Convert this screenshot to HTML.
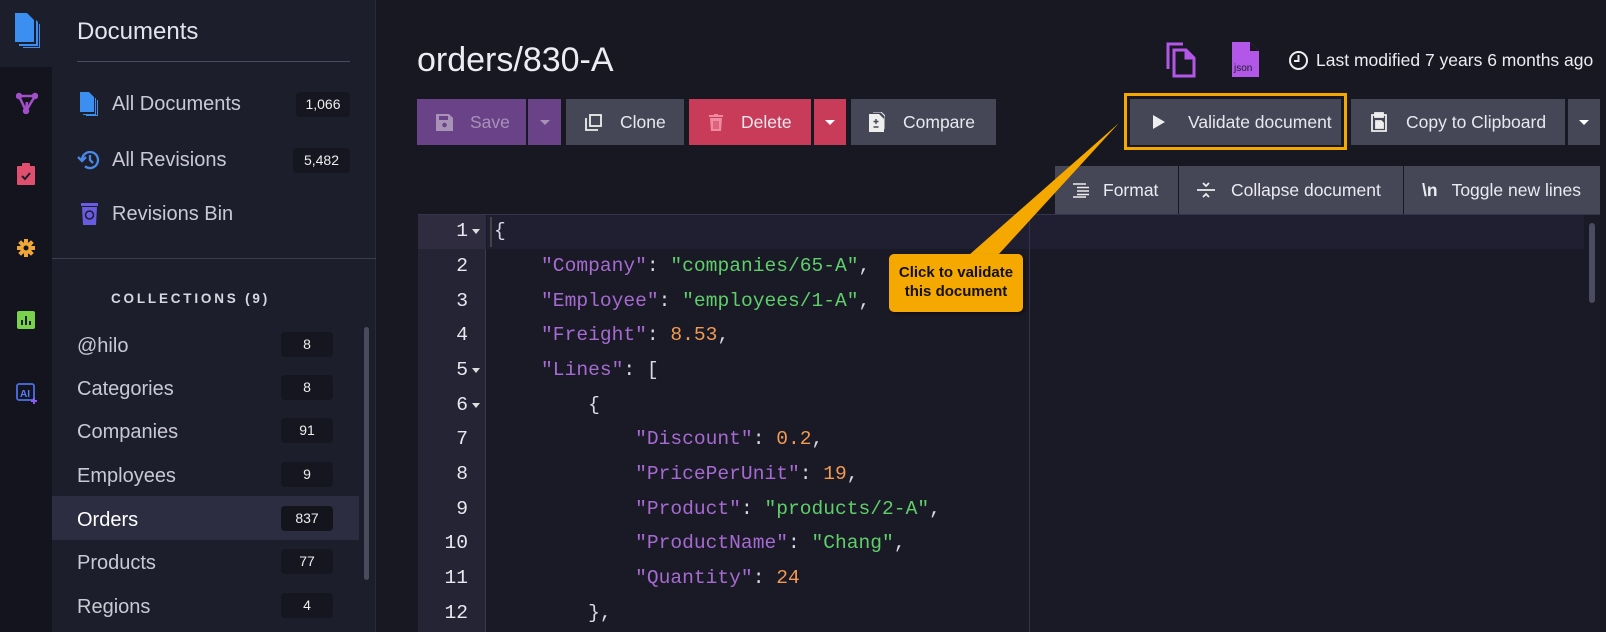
<!DOCTYPE html>
<html><head><meta charset="utf-8"><style>
*{box-sizing:border-box;margin:0;padding:0}
body{width:1606px;height:632px;overflow:hidden;background:#171822;font-family:"Liberation Sans",sans-serif;color:#e6e6ee;position:relative}
.a{position:absolute}
.strip{left:0;top:0;width:52px;height:632px;background:#13141d}
.nav{left:52px;top:0;width:324px;height:632px;background:#1d1e2b;border-right:1px solid #2a2b38}
.navitem{position:absolute;left:77px;font-size:20px;color:#c9c9d6}
.badge{position:absolute;background:#15161f;border-radius:4px;color:#eee;font-size:14px;text-align:center;line-height:25px;height:25px}
.btn{position:absolute;top:99px;height:46px;background:#454756;color:#e8e8ef;font-size:17.5px;display:flex;align-items:center}
.mono{font-family:"Liberation Mono",monospace;font-size:19.6px}
.ln{position:absolute;left:418px;width:50px;text-align:right;color:#e8e8ee}
.cl{position:absolute;left:494px;white-space:pre;color:#d9d9e4}
.k{color:#a66bd1}.s{color:#5fcf6a}.n{color:#f09a52}
.tb{position:absolute;top:166px;height:48px;background:#454756;font-size:17.5px;color:#eaeaf0;display:flex;align-items:center}
</style></head><body>
<div class="a strip"></div>
<div class="a" style="left:0;top:0;width:52px;height:67px;background:#1d1e2b"></div>
<svg class="a" style="left:12px;top:12px" width="30" height="36" viewBox="0 0 30 36"><path d="M3 1h12l7 7v22H3z" fill="#3a8ff0"/><path d="M24 8v24H7v2h19V10z" fill="#3a8ff0"/><path d="M28 12v24H11v-1h16V12z" fill="#3a8ff0"/></svg>
<svg class="a" style="left:16px;top:92px" width="22" height="22" viewBox="0 0 22 22" fill="none" stroke="#a24fc9" stroke-width="2.5"><path d="M3 4L19 4L10 19Z"/><circle cx="3" cy="4" r="2" fill="#a24fc9"/><circle cx="19" cy="4" r="2" fill="#a24fc9"/><circle cx="10" cy="19" r="2" fill="#a24fc9"/><path d="M10 19L11 10"/></svg>
<svg class="a" style="left:17px;top:163px" width="18" height="22" viewBox="0 0 18 22"><rect x="0" y="3" width="18" height="19" rx="1" fill="#e0506e"/><rect x="5" y="0" width="8" height="5" rx="1" fill="#e0506e"/><path d="M5 13l3 3 5-6" stroke="#1d1e2b" stroke-width="2" fill="none"/></svg>
<svg class="a" style="left:17px;top:239px" width="18" height="18" viewBox="0 0 18 18"><g fill="#f0a73a"><circle cx="9" cy="9" r="6"/><rect x="7" y="0" width="4" height="18"/><rect x="0" y="7" width="18" height="4"/><rect x="7" y="0" width="4" height="18" transform="rotate(45 9 9)"/><rect x="7" y="0" width="4" height="18" transform="rotate(-45 9 9)"/></g><circle cx="9" cy="9" r="2.5" fill="#13141d"/></svg>
<svg class="a" style="left:17px;top:311px" width="18" height="18" viewBox="0 0 18 18"><rect width="18" height="18" rx="2" fill="#7ad24a"/><path d="M5 14V9M9 14V5M13 14V10" stroke="#1d1e2b" stroke-width="2"/></svg>
<svg class="a" style="left:16px;top:383px" width="22" height="22" viewBox="0 0 22 22"><rect x="1" y="1" width="17" height="16" rx="2" fill="none" stroke="#4b6fe8" stroke-width="1.8"/><text x="4" y="14" font-size="10" font-weight="bold" fill="#5a7cff" font-family="Liberation Sans">AI</text><path d="M18 15v6M15 18h6" stroke="#8b5cf6" stroke-width="2"/></svg>
<div class="a nav"></div>
<div class="a" style="left:77px;top:18px;font-size:24px;color:#e4e4ec">Documents</div>
<div class="a" style="left:77px;top:61px;width:273px;height:1px;background:#4a4b5e"></div>
<svg class="a" style="left:79px;top:92px" width="20" height="24" viewBox="0 0 20 24"><path d="M1 0h9l5 5v15H1z" fill="#3a8ff0"/><path d="M16 6v16H4v1h13V6z" fill="#3a8ff0"/><path d="M19 8v16H7v-1h11V8z" fill="#3a8ff0"/></svg>
<div class="navitem" style="left:112px;top:93px">All Documents</div>
<div class="badge" style="left:296px;top:92px;width:54px">1,066</div>
<svg class="a" style="left:77px;top:149px" width="24" height="22" viewBox="0 0 24 22" fill="none" stroke="#4a88e8" stroke-width="2.3"><path d="M5 11a8 8 0 1 1 3 6.3"/><path d="M1 8l4 4 4-4"/><path d="M13 6v5l3 3"/></svg>
<div class="navitem" style="left:112px;top:149px">All Revisions</div>
<div class="badge" style="left:293px;top:148px;width:57px">5,482</div>
<svg class="a" style="left:81px;top:202px" width="17" height="23" viewBox="0 0 17 23"><rect x="0" y="1" width="17" height="3" fill="#6a5ce0"/><path d="M1 5h15l-1 18H2z" fill="#6a5ce0"/><circle cx="8.5" cy="13" r="4" fill="none" stroke="#1d1e2b" stroke-width="1.5"/></svg>
<div class="navitem" style="left:112px;top:203px">Revisions Bin</div>
<div class="a" style="left:52px;top:258px;width:324px;height:1px;background:#3c3d4e"></div>
<div class="a" style="left:111px;top:291px;font-size:13.5px;font-weight:bold;letter-spacing:2.8px;color:#d8d8e2">COLLECTIONS (9)</div>
<div class="a" style="left:52px;top:496px;width:307px;height:44px;background:#2c2d40"></div>
<div class="navitem" style="top:335px">@hilo</div><div class="badge" style="left:281px;top:332px;width:52px">8</div>
<div class="navitem" style="top:378px">Categories</div><div class="badge" style="left:281px;top:375px;width:52px">8</div>
<div class="navitem" style="top:421px">Companies</div><div class="badge" style="left:281px;top:418px;width:52px">91</div>
<div class="navitem" style="top:465px">Employees</div><div class="badge" style="left:281px;top:462px;width:52px">9</div>
<div class="navitem" style="top:509px;color:#fff">Orders</div><div class="badge" style="left:281px;top:506px;width:52px;background:#13141c">837</div>
<div class="navitem" style="top:552px">Products</div><div class="badge" style="left:281px;top:549px;width:52px">77</div>
<div class="navitem" style="top:596px">Regions</div><div class="badge" style="left:281px;top:593px;width:52px">4</div>
<div class="a" style="left:364px;top:327px;width:5px;height:253px;border-radius:3px;background:#4a4b5c"></div>

<div class="a" style="left:417px;top:41px;font-size:34px;color:#ececf2">orders/830-A</div>
<svg class="a" style="left:1165px;top:42px" width="32" height="36" viewBox="0 0 32 36" fill="none" stroke="#b357e8" stroke-width="3"><path d="M3 27V2h15"/><path d="M9 8h12l8 8v18H9z"/><path d="M21 8v8h8" fill="#b357e8"/></svg>
<svg class="a" style="left:1232px;top:42px" width="27" height="35" viewBox="0 0 27 35"><path d="M0 0h18l9 9v26H0z" fill="#b357e8"/><path d="M18 0v9h9z" fill="#171822"/><text x="2" y="29" font-size="10" fill="#1d1e2b" font-family="Liberation Sans">json</text></svg>
<svg class="a" style="left:1288px;top:50px" width="21" height="21" viewBox="0 0 21 21" fill="none" stroke="#eee" stroke-width="2"><circle cx="10.5" cy="10.5" r="8.5"/><path d="M10.5 5v6H6"/></svg>
<div class="a" style="left:1316px;top:50px;font-size:17.5px;color:#ececf2">Last modified 7 years 6 months ago</div>

<div class="btn" style="left:417px;width:109px;background:#6a4288;color:#a892b8"><svg style="margin-left:19px" width="17" height="17" viewBox="0 0 17 17"><path d="M0 0h13l4 4v13H0z" fill="#a892b8"/><rect x="3" y="2" width="9" height="4" fill="#6a4288"/><circle cx="8.5" cy="11" r="2.3" fill="#6a4288"/></svg><span style="margin-left:17px">Save</span></div>
<div class="btn" style="left:528px;width:33px;background:#6a4288;justify-content:center"><span style="border:5px solid transparent;border-top:5px solid #a892b8;margin-top:5px"></span></div>
<div class="btn" style="left:566px;width:118px"><svg style="margin-left:19px" width="17" height="17" viewBox="0 0 17 17" fill="none" stroke="#eee" stroke-width="1.8"><rect x="5" y="1" width="11" height="11"/><path d="M1 4v12h12"/></svg><span style="margin-left:18px">Clone</span></div>
<div class="btn" style="left:689px;width:122px;background:#c83c5a"><svg style="margin-left:20px" width="14" height="17" viewBox="0 0 14 17"><rect x="0" y="1" width="14" height="2" fill="#f08aa0"/><rect x="5" y="0" width="4" height="2" fill="#f08aa0"/><path d="M1 4h12l-1 13H2z" fill="#f08aa0"/><path d="M5 7v8M7 7v8M9 7v8" stroke="#c83c5a"/></svg><span style="margin-left:18px">Delete</span></div>
<div class="btn" style="left:814px;width:32px;background:#c83c5a;justify-content:center"><span style="border:5px solid transparent;border-top:5px solid #fff;margin-top:5px"></span></div>
<div class="btn" style="left:851px;width:145px"><svg style="margin-left:18px" width="16" height="20" viewBox="0 0 16 20"><path d="M0 2h10l5 5v13H0z" fill="#eee"/><path d="M4 0h8l4 4v13" fill="none" stroke="#eee"/><path d="M7 7v5M4.5 9.5h5M4.5 15h5" stroke="#454756" stroke-width="1.4"/></svg><span style="margin-left:18px">Compare</span></div>

<div class="a" style="left:1124px;top:93px;width:223px;height:57px;border:3px solid #f5a800"></div>
<div class="btn" style="left:1130px;width:211px"><svg style="margin-left:23px" width="12" height="14" viewBox="0 0 12 14"><path d="M0 0l12 7-12 7z" fill="#eee"/></svg><span style="margin-left:23px">Validate document</span></div>
<div class="btn" style="left:1351px;width:214px"><svg style="margin-left:20px" width="16" height="20" viewBox="0 0 16 20" fill="none" stroke="#eee" stroke-width="1.8"><path d="M4 3H1v16h14V3h-3"/><rect x="4" y="1" width="8" height="4" fill="#eee"/><path d="M5 9h5l2 2v5H5z" fill="#eee"/></svg><span style="margin-left:19px">Copy to Clipboard</span></div>
<div class="btn" style="left:1568px;width:32px;justify-content:center"><span style="border:5px solid transparent;border-top:5px solid #fff;margin-top:5px"></span></div>

<div class="tb" style="left:1055px;width:123px"><svg style="margin-left:18px" width="16" height="15" viewBox="0 0 16 15" stroke="#eee" stroke-width="1.6"><path d="M0 1h13M4 4.5h12M4 8h12M4 11.5h12M0 14h13"/></svg><span style="margin-left:14px">Format</span></div>
<div class="tb" style="left:1179px;width:224px"><svg style="margin-left:18px" width="18" height="16" viewBox="0 0 18 16" stroke="#eee" stroke-width="1.8" fill="#eee"><path d="M0 8h18"/><path d="M6 1l3 3 3-3M6 15l3-3 3 3" fill="none"/></svg><span style="margin-left:16px">Collapse document</span></div>
<div class="tb" style="left:1404px;width:196px"><span style="margin-left:18px;font-weight:bold">\n</span><span style="margin-left:14px">Toggle new lines</span></div>

<div class="a" style="left:418px;top:214px;width:1182px;height:418px;background:#1a1926;border-top:1px solid #34344a;border-left:1px solid #34344a"></div>
<div class="a" style="left:418px;top:215px;width:68px;height:417px;background:#242434;border-right:1px solid #3a3a4e"></div>
<div class="a" style="left:418px;top:215px;width:68px;height:34px;background:#2f2c40"></div>
<div class="a" style="left:487px;top:215px;width:1097px;height:34px;background:#201e31"></div>
<div class="a" style="left:490px;top:217px;width:2px;height:30px;background:#444"></div>
<div class="a" style="left:1029px;top:215px;width:1px;height:417px;background:#33334a"></div>
<div class="a" style="left:1589px;top:223px;width:6px;height:80px;border-radius:3px;background:#4c4c60"></div>
<div class="mono">
<div class="ln" style="top:220px">1</div><div class="ln" style="top:255px">2</div><div class="ln" style="top:290px">3</div><div class="ln" style="top:324px">4</div><div class="ln" style="top:359px">5</div><div class="ln" style="top:394px">6</div><div class="ln" style="top:428px">7</div><div class="ln" style="top:463px">8</div><div class="ln" style="top:498px">9</div><div class="ln" style="top:532px">10</div><div class="ln" style="top:567px">11</div><div class="ln" style="top:602px">12</div>
<div class="a" style="left:472px;top:229px;border:4px solid transparent;border-top:5px solid #ddd"></div>
<div class="a" style="left:472px;top:368px;border:4px solid transparent;border-top:5px solid #ddd"></div>
<div class="a" style="left:472px;top:403px;border:4px solid transparent;border-top:5px solid #ddd"></div>
<div class="cl" style="top:220px">{</div>
<div class="cl" style="top:255px">    <span class="k">"Company"</span>: <span class="s">"companies/65-A"</span>,</div>
<div class="cl" style="top:290px">    <span class="k">"Employee"</span>: <span class="s">"employees/1-A"</span>,</div>
<div class="cl" style="top:324px">    <span class="k">"Freight"</span>: <span class="n">8.53</span>,</div>
<div class="cl" style="top:359px">    <span class="k">"Lines"</span>: [</div>
<div class="cl" style="top:394px">        {</div>
<div class="cl" style="top:428px">            <span class="k">"Discount"</span>: <span class="n">0.2</span>,</div>
<div class="cl" style="top:463px">            <span class="k">"PricePerUnit"</span>: <span class="n">19</span>,</div>
<div class="cl" style="top:498px">            <span class="k">"Product"</span>: <span class="s">"products/2-A"</span>,</div>
<div class="cl" style="top:532px">            <span class="k">"ProductName"</span>: <span class="s">"Chang"</span>,</div>
<div class="cl" style="top:567px">            <span class="k">"Quantity"</span>: <span class="n">24</span></div>
<div class="cl" style="top:602px">        },</div>
</div>

<svg class="a" style="left:0;top:0" width="1606" height="632"><path d="M969 255L1119 123L998 255Z" fill="#f5a800"/></svg>
<div class="a" style="left:889px;top:254px;width:134px;height:58px;background:#f5a800;border-radius:5px;box-shadow:2px 2px 3px rgba(0,0,0,.4);color:#111;font-weight:bold;font-size:15px;line-height:19px;text-align:center;padding-top:9px">Click to validate<br>this document</div>
</body></html>
